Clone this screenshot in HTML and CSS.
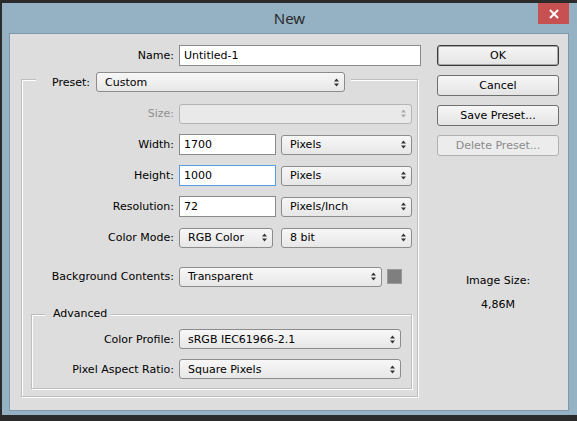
FILE: index.html
```html
<!DOCTYPE html>
<html lang="en">
<head>
    <meta charset="UTF-8">
    <title>New</title>
    <link rel="stylesheet" href="styles.css">
</head>
<body>
    <div class="window">
        <div class="titlebar">
            <span></span>
            <div class="title">New</div>
            <div class="close">
                <svg width="10" height="10" viewBox="0 0 10 10">
                    <path d="M1 1 L9 9 M9 1 L1 9" stroke="#fff" stroke-width="2"/>
                </svg>
            </div>
        </div>

        <div class="content">
            <div class="form">
                <div class="row">
                    <label class="label name-label">Name:</label>
                    <input class="field name-field" type="text" value="Untitled-1">
                </div>

                <div class="group preset-group">
                    <div class="group-head preset-head">
                        <label>Preset:</label>
                        <div class="select preset-select">
                            <span>Custom</span>
                            <svg class="arrows" width="5" height="9" viewBox="0 0 5 9"><path d="M0 3.5 L2.5 0.5 L5 3.5 Z M0 5.5 L2.5 8.5 L5 5.5 Z"/></svg>
                        </div>
                    </div>

                    <div class="row first">
                        <label class="label disabled">Size:</label>
                        <div class="select size-select disabled">
                            <span></span>
                            <svg class="arrows" width="5" height="9" viewBox="0 0 5 9"><path d="M0 3.5 L2.5 0.5 L5 3.5 Z M0 5.5 L2.5 8.5 L5 5.5 Z"/></svg>
                        </div>
                    </div>

                    <div class="row">
                        <label class="label">Width:</label>
                        <input class="field num-field" type="text" value="1700">
                        <div class="select unit-select">
                            <span>Pixels</span>
                            <svg class="arrows" width="5" height="9" viewBox="0 0 5 9"><path d="M0 3.5 L2.5 0.5 L5 3.5 Z M0 5.5 L2.5 8.5 L5 5.5 Z"/></svg>
                        </div>
                    </div>

                    <div class="row">
                        <label class="label">Height:</label>
                        <input class="field num-field focused" type="text" value="1000">
                        <div class="select unit-select">
                            <span>Pixels</span>
                            <svg class="arrows" width="5" height="9" viewBox="0 0 5 9"><path d="M0 3.5 L2.5 0.5 L5 3.5 Z M0 5.5 L2.5 8.5 L5 5.5 Z"/></svg>
                        </div>
                    </div>

                    <div class="row">
                        <label class="label">Resolution:</label>
                        <input class="field num-field" type="text" value="72">
                        <div class="select unit-select">
                            <span>Pixels/Inch</span>
                            <svg class="arrows" width="5" height="9" viewBox="0 0 5 9"><path d="M0 3.5 L2.5 0.5 L5 3.5 Z M0 5.5 L2.5 8.5 L5 5.5 Z"/></svg>
                        </div>
                    </div>

                    <div class="row">
                        <label class="label">Color Mode:</label>
                        <div class="select mode-select">
                            <span>RGB Color</span>
                            <svg class="arrows" width="5" height="9" viewBox="0 0 5 9"><path d="M0 3.5 L2.5 0.5 L5 3.5 Z M0 5.5 L2.5 8.5 L5 5.5 Z"/></svg>
                        </div>
                        <div class="select unit-select">
                            <span>8 bit</span>
                            <svg class="arrows" width="5" height="9" viewBox="0 0 5 9"><path d="M0 3.5 L2.5 0.5 L5 3.5 Z M0 5.5 L2.5 8.5 L5 5.5 Z"/></svg>
                        </div>
                    </div>

                    <div class="row bg-row">
                        <label class="label">Background Contents:</label>
                        <div class="select bg-select">
                            <span>Transparent</span>
                            <svg class="arrows" width="5" height="9" viewBox="0 0 5 9"><path d="M0 3.5 L2.5 0.5 L5 3.5 Z M0 5.5 L2.5 8.5 L5 5.5 Z"/></svg>
                        </div>
                        <div class="swatch"></div>
                    </div>

                    <div class="group advanced-group">
                        <div class="group-head advanced-head">Advanced</div>

                        <div class="row adv-row first">
                            <label class="label">Color Profile:</label>
                            <div class="select profile-select">
                                <span>sRGB IEC61966-2.1</span>
                                <svg class="arrows" width="5" height="9" viewBox="0 0 5 9"><path d="M0 3.5 L2.5 0.5 L5 3.5 Z M0 5.5 L2.5 8.5 L5 5.5 Z"/></svg>
                            </div>
                        </div>

                        <div class="row adv-row">
                            <label class="label">Pixel Aspect Ratio:</label>
                            <div class="select profile-select">
                                <span>Square Pixels</span>
                                <svg class="arrows" width="5" height="9" viewBox="0 0 5 9"><path d="M0 3.5 L2.5 0.5 L5 3.5 Z M0 5.5 L2.5 8.5 L5 5.5 Z"/></svg>
                            </div>
                        </div>
                    </div>
                </div>
            </div>

            <div class="side">
                <button class="btn default">OK</button>
                <button class="btn">Cancel</button>
                <button class="btn">Save Preset...</button>
                <button class="btn" disabled>Delete Preset...</button>

                <div class="image-size">
                    <div>Image Size:</div>
                    <div>4,86M</div>
                </div>
            </div>
        </div>
    </div>
</body>
</html>
```

FILE: styles.css
```css
body {
    margin: 0;
    background-color: #2b2b2b;
    font-family: "DejaVu Sans", Verdana, sans-serif;
    font-size: 11px;
    color: #000;
}

.window {
    margin: 3px 0 0 2px;
    width: 575px;
    height: 412px;
    background-color: #95b1c4;
}

.titlebar {
    display: grid;
    grid-template-columns: 1fr auto 1fr;
    height: 30px;
}

.title {
    font-family: "Noto Sans", "Open Sans", sans-serif;
    font-size: 15px;
    color: #2a2a2a;
    line-height: 30px;
}

.close {
    justify-self: end;
    display: flex;
    align-items: center;
    justify-content: center;
    width: 31px;
    height: 21px;
    margin-right: 8px;
    background-color: #c75050;
}

.content {
    display: flex;
    box-sizing: border-box;
    height: 378px;
    margin: 0 8px 0 7px;
    padding: 11px 0 0 11px;
    border: 1px solid #7f98aa;
    background-color: #dddddd;
}

.form {
    width: 400px;
}

.row {
    display: flex;
    align-items: center;
    height: 21px;
    margin-top: 10px;
}

.form > .row {
    margin-top: 0;
}

.row.first {
    margin-top: 11px;
}

.row.bg-row {
    margin-top: 18px;
}

.label {
    flex: none;
    width: 152px;
    margin-right: 5px;
    text-align: right;
    white-space: nowrap;
}

.label.name-label {
    width: 153px;
}

.label.disabled {
    color: #8f8f8f;
}

.field {
    box-sizing: border-box;
    height: 21px;
    margin: 0;
    padding: 0 4px;
    border: 1px solid #8a8a8a;
    background-color: #fff;
    font-family: inherit;
    font-size: 11px;
    color: #000;
    outline: none;
}

.field.focused {
    border-color: #569de5;
}

.name-field {
    width: 242px;
}

.num-field {
    width: 97px;
    margin-right: 5px;
}

.select {
    flex: none;
    display: flex;
    align-items: center;
    justify-content: space-between;
    box-sizing: border-box;
    height: 20px;
    padding: 0 5px 0 8px;
    border: 1px solid #8c8c8c;
    border-radius: 3px;
    background: linear-gradient(#f7f7f7, #e7e7e7);
    white-space: nowrap;
}

.select .arrows {
    fill: #333;
}

.select.disabled {
    border-color: #b4b4b4;
    background: #e9e9e9;
}

.select.disabled .arrows {
    fill: #a9a9a9;
}

.preset-select {
    width: 249px;
}

.size-select {
    width: 233px;
}

.unit-select {
    width: 131px;
}

.mode-select {
    width: 94px;
    margin-right: 8px;
}

.bg-select {
    width: 203px;
    margin-right: 5px;
}

.profile-select {
    width: 222px;
}

.swatch {
    width: 13px;
    height: 13px;
    border: 1px solid #9a9a9a;
    background-color: #7f7f7f;
}

.group {
    box-sizing: border-box;
    border: 1px solid #bdbdbd;
    box-shadow: inset 1px 1px 0 #fff, 1px 1px 0 #fff;
}

.preset-group {
    width: 397px;
    margin-top: 13px;
}

.group-head {
    width: fit-content;
    background-color: #dddddd;
    margin-top: -8px;
}

.preset-head {
    display: flex;
    align-items: center;
    gap: 6px;
    height: 20px;
    margin-left: 14px;
    padding: 0 6px 0 16px;
}

.advanced-group {
    width: 381px;
    margin: 27px 0 7px 9px;
    padding-bottom: 9px;
}

.advanced-head {
    height: 14px;
    line-height: 14px;
    margin-left: 13px;
    padding: 0 4px 0 8px;
}

.adv-row {
    height: 20px;
}

.adv-row.first {
    margin-top: 8px;
}

.adv-row .label {
    width: 142px;
}

.side {
    display: flex;
    flex-direction: column;
    gap: 9px;
    width: 122px;
    margin-left: 16px;
}

.btn {
    box-sizing: border-box;
    height: 21px;
    margin: 0;
    padding: 0;
    border: 1px solid #707070;
    border-radius: 3px;
    background: linear-gradient(#f6f6f6, #e4e4e4);
    font-family: inherit;
    font-size: 11px;
    color: #000;
}

.btn.default {
    border-color: #3a3a3a;
    box-shadow: inset 0 0 0 1px #a8a8a8;
}

.btn:disabled {
    border-color: #b0b0b0;
    background: #ececec;
    color: #8a8a8a;
}

.image-size {
    margin-top: 104px;
    text-align: center;
    line-height: 24px;
}
```
